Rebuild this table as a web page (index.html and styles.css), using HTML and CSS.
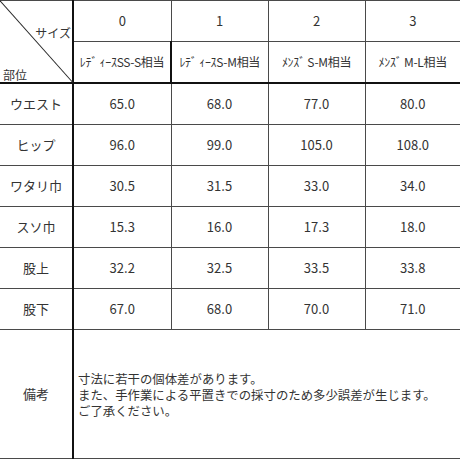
FILE: index.html
```html
<!DOCTYPE html>
<html lang="ja">
<head>
<meta charset="utf-8">
<link rel="stylesheet" href="styles.css">
</head>
<body>
<div class="sheet">
<table class="size-table">
  <colgroup>
    <col class="c0"><col class="c1"><col class="c2"><col class="c3"><col class="c4">
  </colgroup>
  <tr class="head1">
    <th class="corner" rowspan="2">
      <div class="corner-inner">
        <span class="size-label">サイズ</span>
        <span class="part-label">部位</span>
      </div>
    </th>
    <td>0</td><td>1</td><td>2</td><td>3</td>
  </tr>
  <tr class="head2">
    <td>ﾚﾃﾞ ｨｰｽSS-S相当</td><td>ﾚﾃﾞ ｨｰｽS-M相当</td><td>ﾒﾝｽﾞ S-M相当</td><td>ﾒﾝｽﾞ M-L相当</td>
  </tr>
  <tr class="row first"><th>ウエスト</th><td>65.0</td><td>68.0</td><td>77.0</td><td>80.0</td></tr>
  <tr class="row"><th>ヒップ</th><td>96.0</td><td>99.0</td><td>105.0</td><td>108.0</td></tr>
  <tr class="row"><th>ワタリ巾</th><td>30.5</td><td>31.5</td><td>33.0</td><td>34.0</td></tr>
  <tr class="row"><th>スソ巾</th><td>15.3</td><td>16.0</td><td>17.3</td><td>18.0</td></tr>
  <tr class="row"><th>股上</th><td>32.2</td><td>32.5</td><td>33.5</td><td>33.8</td></tr>
  <tr class="row"><th>股下</th><td>67.0</td><td>68.0</td><td>70.0</td><td>71.0</td></tr>
  <tr class="remarks">
    <th>備考</th>
    <td colspan="4" class="note">寸法に若干の個体差があります。<br>また、手作業による平置きでの採寸のため多少誤差が生じます。<br>ご了承ください。</td>
  </tr>
</table>
<div class="diag"></div>
</div>
</body>
</html>
```

FILE: styles.css
```css
html, body {
  margin: 0;
  padding: 0;
  background: #ffffff;
}

body {
  font-family: "Noto Sans CJK JP", "Noto Sans", sans-serif;
  color: #333333;
}

.sheet {
  position: relative;
  width: 460px;
}

.diag {
  position: absolute;
  left: 0;
  top: 0;
  width: 110px;
  height: 0;
  border-top: 1.5px solid #2a2a2a;
  transform-origin: 0 0;
  transform: rotate(48.3deg);
  pointer-events: none;
}

.size-table {
  width: 460px;
  border-collapse: collapse;
  table-layout: fixed;
  font-size: 13px;
}

.c0 { width: 73px; }
.c1 { width: 98px; }
.c2 { width: 97px; }
.c3 { width: 97px; }
.c4 { width: 95px; }

.size-table th,
.size-table td {
  border: 1px solid #4a4a4a;
  padding: 0;
  text-align: center;
  vertical-align: middle;
  font-weight: normal;
  line-height: 1.2;
}

.size-table tr > :first-child {
  border-left: none;
  border-right: 2px solid #111111;
}

.size-table tr > :last-child {
  border-right: none;
}

.head1 > * {
  border-top: none;
  height: 40px;
}

.head2 td {
  height: 40px;
  font-size: 12px;
  letter-spacing: -0.3px;
}

.head2 td,
.head1 .corner {
  border-bottom: 2px solid #111111;
}

.row > * {
  height: 40px;
}

.corner-inner {
  display: flex;
  flex-direction: column;
  justify-content: space-between;
  height: 81px;
}

.size-label {
  align-self: flex-end;
  margin-top: 25px;
  margin-right: 1px;
  font-size: 12px;
}

.part-label {
  align-self: flex-start;
  margin-left: 3px;
  margin-bottom: 0;
  font-size: 12px;
}

.remarks > * {
  height: 126px;
  border-bottom: 2px solid #111111;
}

.note {
  text-align: left !important;
  padding-left: 4px !important;
  font-size: 12.4px;
  line-height: 16px !important;
  padding-top: 2px !important;
}
```
